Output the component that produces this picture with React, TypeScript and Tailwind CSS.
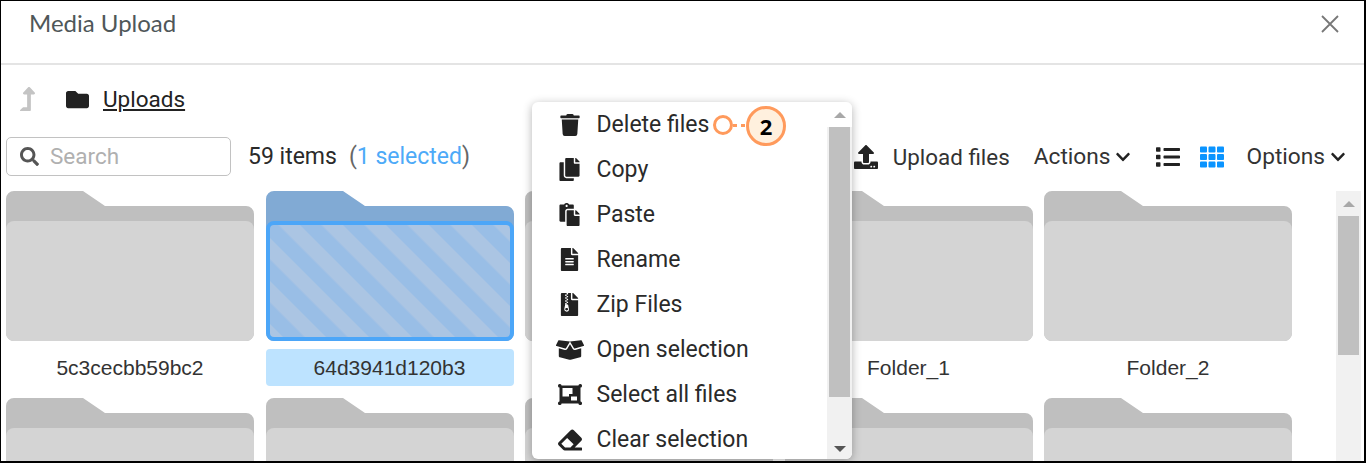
import React from "react";
import { FaTrash, FaCopy, FaPaste, FaFileAlt, FaFileArchive, FaBoxOpen, FaEraser, FaUpload, FaList, FaTh, FaSearch, FaFolder, FaLevelUpAlt, FaChevronDown } from "react-icons/fa";

const roboto = "font-['Roboto',sans-serif]";

function SelectAllIcon({ className }: { className?: string }) {
  return (
    <svg width="24" height="21" viewBox="0 0 24 21" className={className}>
      <rect x="1.5" y="1.5" width="21" height="18" fill="#222" />
      <rect x="0" y="0" width="3.5" height="3.5" rx="1.5" fill="#222" />
      <rect x="20.5" y="0" width="3.5" height="3.5" rx="1.5" fill="#222" />
      <rect x="0" y="17.5" width="3.5" height="3.5" rx="1.5" fill="#222" />
      <rect x="20.5" y="17.5" width="3.5" height="3.5" rx="1.5" fill="#222" />
      <rect x="4.5" y="4" width="10" height="8.5" fill="#fff" />
      <rect x="11" y="10" width="9.5" height="7.5" fill="#222" />
      <rect x="13" y="12.5" width="6" height="4" fill="#fff" />
    </svg>
  );
}

function Folder({ name, selected }: { name: string; selected?: boolean }) {
  return (
    <div className="flex flex-col gap-2 w-[248px]">
      <svg width="248" height="150" viewBox="0 0 248 150" className="block">
        <defs>
          <pattern id="stripes" width="30.4" height="30.4" patternUnits="userSpaceOnUse" patternTransform="rotate(-45)">
            <rect width="30.4" height="30.4" fill="#abc5e3" />
            <rect width="15.2" height="30.4" fill="#99bee6" />
          </pattern>
        </defs>
        <path d="M0 8a8 8 0 0 1 8-8H77L99 15H240a8 8 0 0 1 8 8V142a8 8 0 0 1-8 8H8a8 8 0 0 1-8-8Z" fill={selected ? "#81aad4" : "#bfbfbf"} />
        {selected ? (
          <rect x="2" y="32" width="244" height="116" rx="6" fill="url(#stripes)" stroke="#4ca6f8" strokeWidth="4" />
        ) : (
          <rect x="0" y="30" width="248" height="120" rx="8" fill="#d4d4d4" />
        )}
      </svg>
      <div className={`h-[37px] rounded-[4px] flex items-center justify-center text-[21px] text-[#333] font-['Liberation_Sans',sans-serif] ${selected ? "bg-[#bde3ff]" : ""}`}>{name}</div>
    </div>
  );
}

const menu: [React.ComponentType<{ className?: string }>, string, string][] = [
  [FaTrash, "Delete files", "text-[22px]"],
  [FaCopy, "Copy", "text-[23px]"],
  [FaPaste, "Paste", "text-[23px]"],
  [FaFileAlt, "Rename", "text-[23px]"],
  [FaFileArchive, "Zip Files", "text-[23px]"],
  [FaBoxOpen, "Open selection", "text-[28px]"],
  [SelectAllIcon, "Select all files", ""],
  [FaEraser, "Clear selection", "text-[24px]"],
];

export default function App() {
  return (
    <div className={`relative w-[1366px] h-[463px] overflow-hidden bg-white border-l border-t border-r-2 border-b-2 border-black ${roboto}`}>
      <div className="h-[64px] border-b-2 border-[#e4e4e4] flex justify-between pl-[28px] pr-[24px] pt-[7px]">
        <span className="font-['Lato',sans-serif] text-[24px] leading-[30px] text-[#4f5759]">Media Upload</span>
        <svg width="20" height="20" viewBox="0 0 20 20" className="mt-[6px]"><path d="M2 2 18 18M18 2 2 18" stroke="#777" strokeWidth="1.8" fill="none" /></svg>
      </div>

      <div className="flex items-center h-[38px] mt-[15px] pl-[18px] text-[#222]">
        <FaLevelUpAlt className="text-[24px] text-[#c4c4c4] w-[17px]" />
        <FaFolder className="text-[23px] ml-[30px] text-[#222]" />
        <span className="ml-[14px] text-[22.5px] leading-[36px] underline underline-offset-2">Uploads</span>
      </div>

      <div className="flex items-center mt-[19px] h-[39px] pl-[5px] text-[23px] leading-[36px]">
        <div className="w-[225px] h-[39px] rounded-[5px] border border-[#c2c2c2] flex items-center pl-[13px] gap-[11px]">
          <FaSearch className="text-[19px] text-[#555]" />
          <span className="text-[#b0b0b0] text-[22.5px] leading-[33px]">Search</span>
        </div>
        <span className="ml-[17px] text-[#2a2a2a]">59 items</span>
        <span className="ml-[12px] text-[#666]">(<span className="text-[#4daaf8]">1 selected</span>)</span>
        <div className="ml-auto flex items-center text-[#333] text-[22.7px] pr-[18px]">
          <FaUpload className="text-[24px] text-[#222]" />
          <span className="ml-[15px] text-[22.4px] leading-[34px]">Upload files</span>
          <span className="ml-[24px]">Actions</span>
          <FaChevronDown className="text-[16px] ml-[4px] text-[#222]" />
          <FaList className="text-[24px] ml-[25px] text-[#222]" />
          <FaTh className="text-[24px] ml-[20px] text-[#0a94ff]" />
          <span className="ml-[23px]">Options</span>
          <FaChevronDown className="text-[16px] ml-[5px] text-[#222]" />
        </div>
      </div>

      <div className="flex mt-[15px] pl-[5px]">
        <div className="grid grid-cols-[repeat(5,248px)] gap-x-[11.5px] gap-y-[12px] w-[1330px] h-[270px] overflow-hidden content-start">
          <Folder name="5c3cecbb59bc2" />
          <Folder name="64d3941d120b3" selected />
          <Folder name="" />
          <Folder name="Folder_1" />
          <Folder name="Folder_2" />
          <Folder name="" />
          <Folder name="" />
          <Folder name="" />
          <Folder name="" />
          <Folder name="" />
        </div>
        <div className="w-[25px] h-[270px] bg-[#f1f1f1] flex flex-col items-center">
          <div className="h-[25px] flex items-center"><div className="w-0 h-0 border-x-[6px] border-x-transparent border-b-[6px] border-b-[#a8a8a8]" /></div>
          <div className="w-[21px] h-[139px] bg-[#c0c0c0]" />
        </div>
      </div>

      <div className="absolute left-[531px] top-[101px] w-[320px] h-[357px] bg-white rounded-[6px] shadow-[0_2px_10px_rgba(0,0,0,0.3)] flex overflow-hidden">
        <div className="w-[295px] flex flex-col">
          {menu.map(([Icon, label, size]) => (
            <div key={label} className="h-[45px] flex items-center text-[#2a2a2a] text-[23px] leading-[36px] shrink-0">
              <div className="w-[64.5px] flex justify-center pl-[11px]"><Icon className={`${size} text-[#222]`} /></div>
              <span>{label}</span>
            </div>
          ))}
        </div>
        <div className="w-[25px] bg-[#f1f1f1] flex flex-col items-center">
          <div className="h-[25px] w-full bg-white flex items-center justify-center"><div className="w-0 h-0 border-x-[6px] border-x-transparent border-b-[6px] border-b-[#a8a8a8]" /></div>
          <div className="w-[21px] h-[270px] bg-[#c0c0c0]" />
          <div className="mt-auto h-[20px] flex items-center"><div className="w-0 h-0 border-x-[6px] border-x-transparent border-t-[6px] border-t-[#555]" /></div>
        </div>
      </div>

      <div className="absolute left-[712px] top-[105px] flex items-start">
        <div className="mt-[9px] w-[20px] h-[20px] rounded-full border-[3px] border-[#ff9a5c] bg-white" />
        <div className="mt-[18px] w-[4px] h-[3px] bg-[#ff9a5c]" />
        <div className="mt-[18px] ml-[4px] w-[4px] h-[3px] bg-[#ff9a5c]" />
        <div className="w-[40px] h-[40px] ml-[1px] rounded-full border-[3px] border-[#ff9a5c] bg-[#fff0de] flex items-center justify-center font-bold text-[22px] text-black font-['Open_Sans',sans-serif]">2</div>
      </div>
    </div>
  );
}
